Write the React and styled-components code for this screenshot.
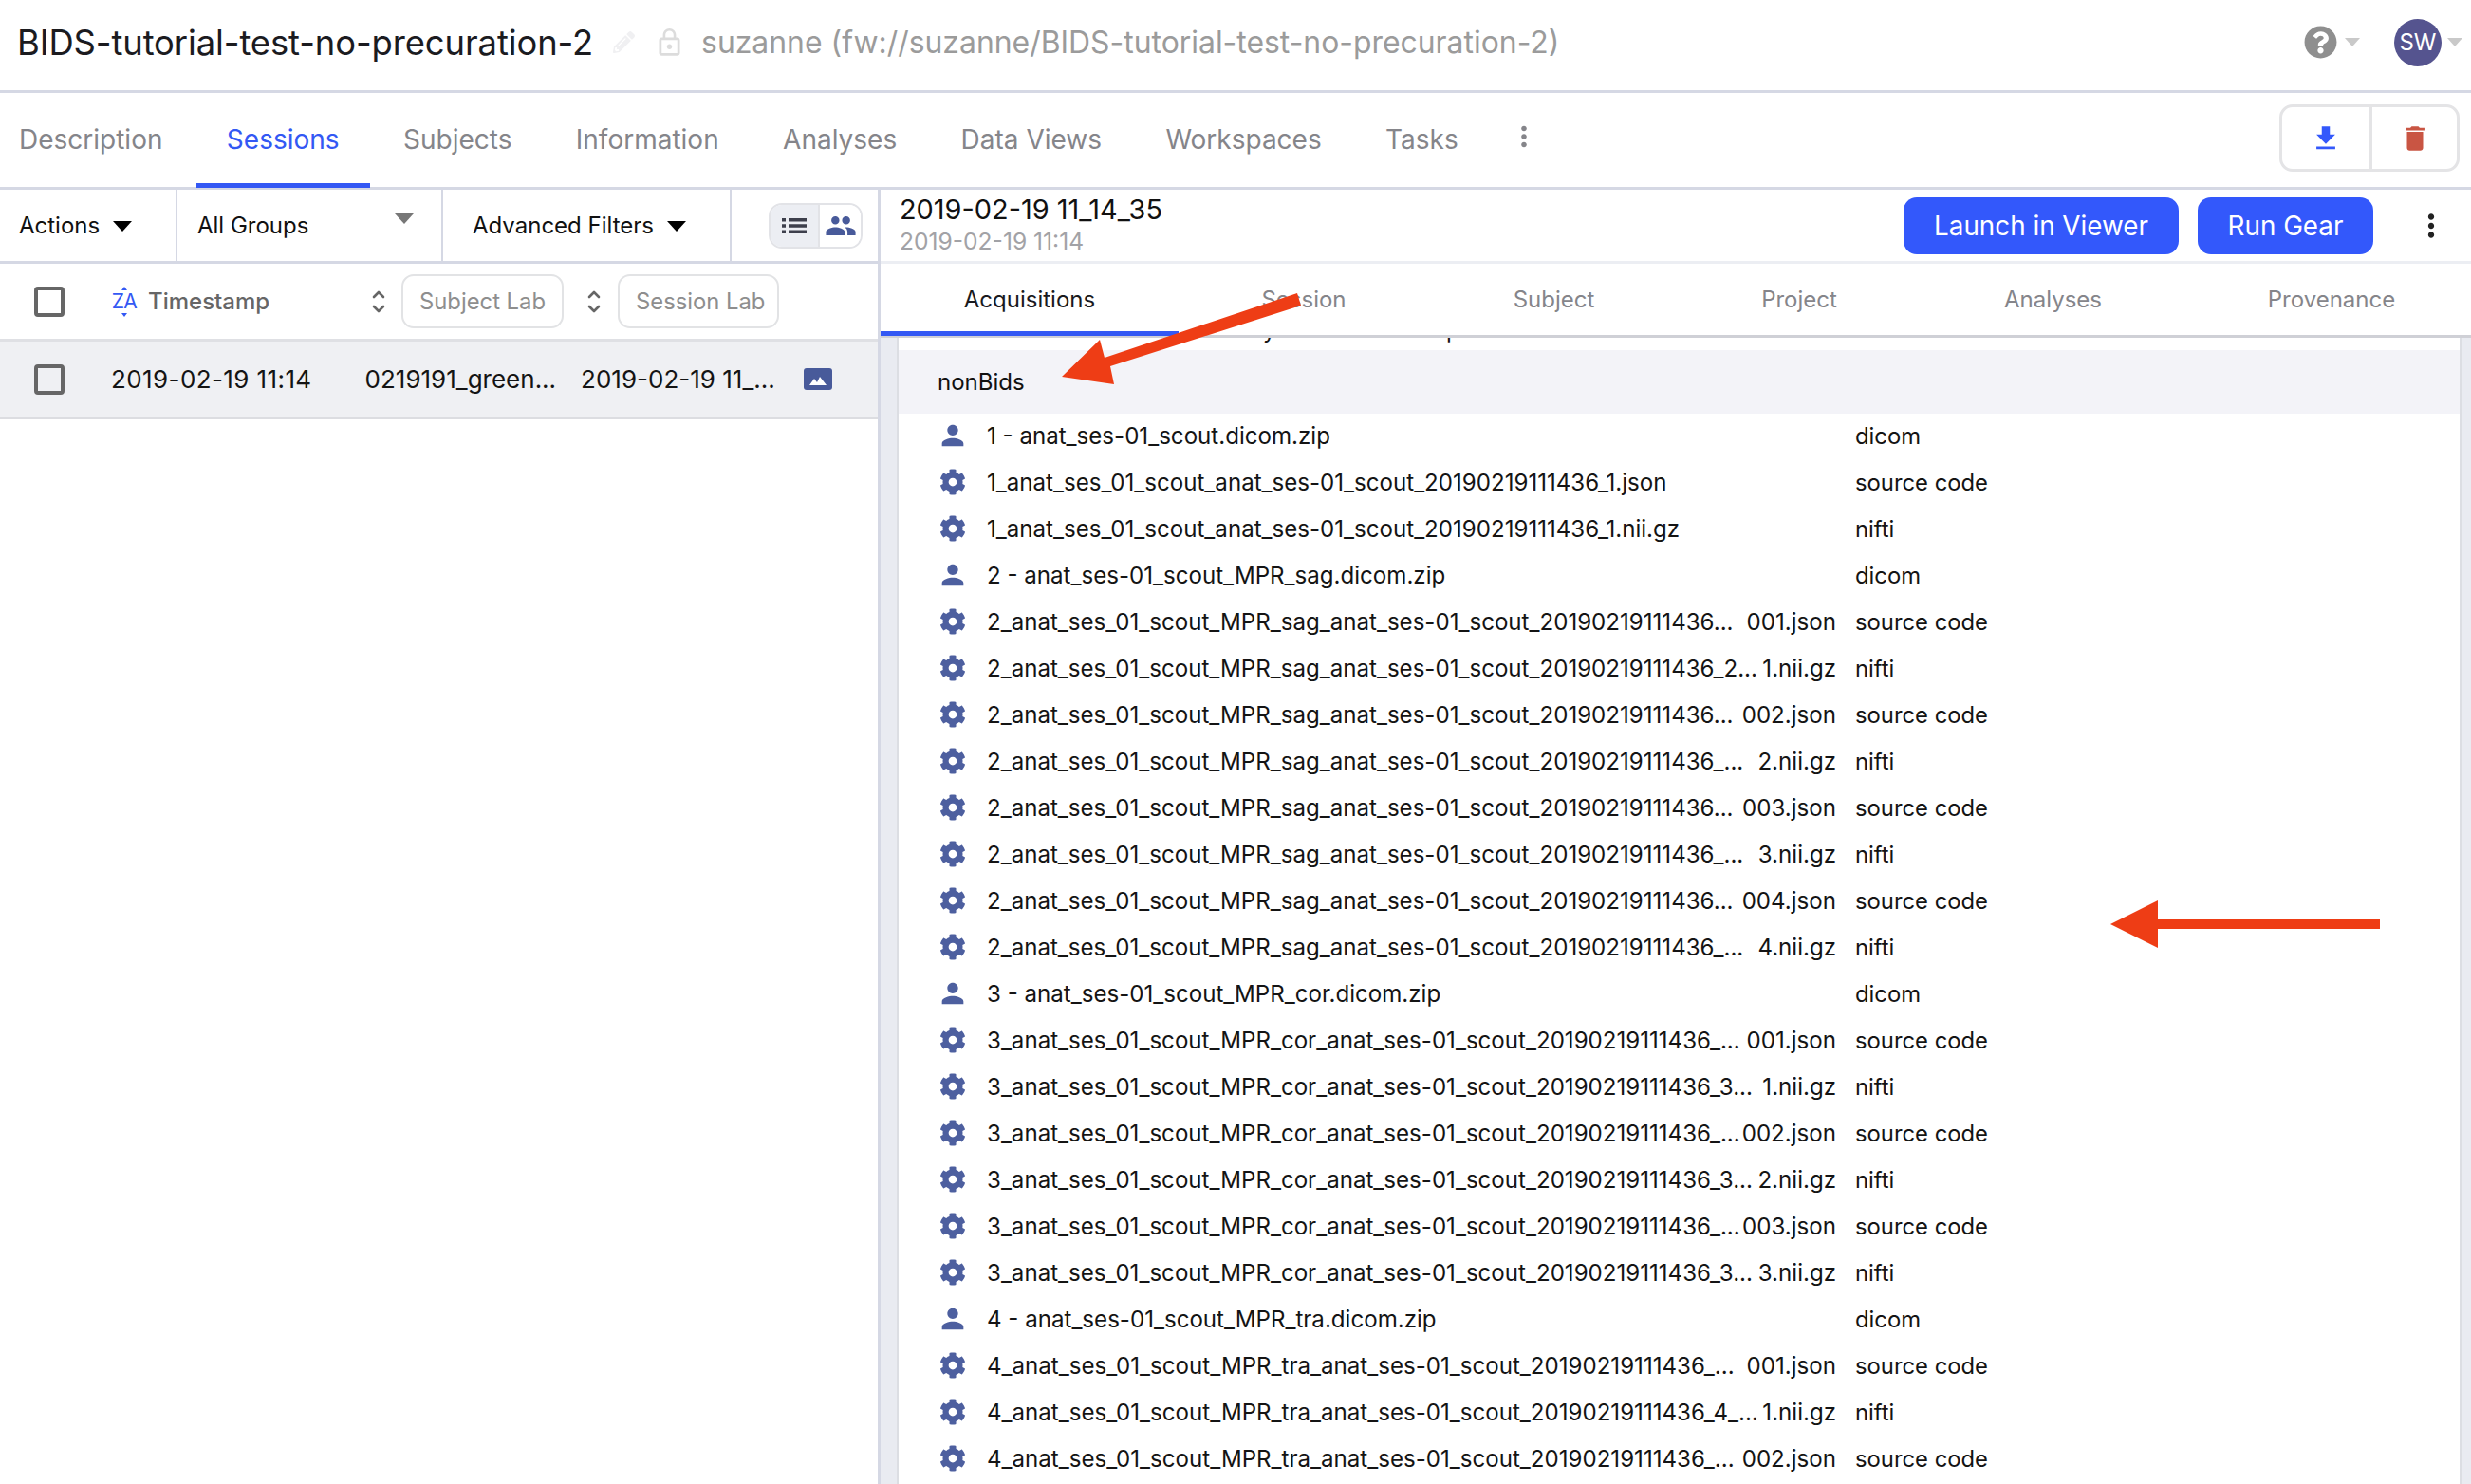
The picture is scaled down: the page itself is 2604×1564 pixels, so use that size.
import React from "react";
import styled, { createGlobalStyle } from "styled-components";
import { FaCog, FaQuestionCircle, FaPencilAlt } from "react-icons/fa";
import { MdPerson, MdPeople, MdFileDownload, MdDelete, MdMoreVert, MdLockOutline } from "react-icons/md";

const Global = createGlobalStyle`
  html, body { margin: 0; padding: 0; background: #fff; }
  body { font-family: Inter, "Liberation Sans", sans-serif; }
  * { box-sizing: border-box; }
`;

const Page = styled.div`
  position: relative; width: 2604px; height: 1564px; overflow: hidden; background: #fff; color: #111;
`;
const TopBar = styled.header`
  height: 98px; border-bottom: 3px solid #d5d8e4; display: flex; align-items: center; padding: 0 9px 6px 18px;
`;
const Title = styled.h1`
  margin: 0; font-size: 36.4px; font-weight: 400; color: #1b1b1f; white-space: nowrap; letter-spacing: -0.1px;
`;
const PencilMark = styled(FaPencilAlt)`
  margin-left: 21px; width: 23px; height: 23px; color: #f0f0f2;
`;
const LockMark = styled(MdLockOutline)`
  margin-left: 20px; width: 33px; height: 34px; color: #dcdcdc;
`;
const PathText = styled.span`
  margin-left: 17px; font-size: 31.9px; color: #9b9b9b; white-space: nowrap;
`;
const TopRight = styled.div`
  margin-left: auto; display: flex; align-items: center;
`;
const HelpMark = styled(FaQuestionCircle)`
  width: 35px; height: 35px; color: #8f8f8f;
`;
const SmallCaret = styled.span`
  width: 0; height: 0; margin-left: ${p => p.$gap}px; border-left: 8px solid transparent; border-right: 8px solid transparent; border-top: 9px solid #c9c9c9;
`;
const Avatar = styled.div`
  width: 50px; height: 50px; margin-left: 36px; border-radius: 50%; background: #55548f; color: #fff; font-size: 24px;
  display: flex; align-items: center; justify-content: center;
`;

const TabBar = styled.nav`
  height: 102px; border-bottom: 3px solid #d5d8e4; display: flex; align-items: stretch; padding-left: 7px; position: relative;
`;
const Tab = styled.div`
  display: flex; align-items: center; padding: 2px 32px 0; margin: 0 1.7px -1px; font-size: 28px; white-space: nowrap;
  color: ${p => (p.$active ? "#3358f4" : "#85858a")};
  border-bottom: 5px solid ${p => (p.$active ? "#3358f4" : "transparent")};
  &:first-child { padding-left: 13px; padding-right: 32px; margin-left: 0; }
`;
const TabDots = styled(MdMoreVert)`
  width: 34px; height: 38px; color: #85858a; align-self: center; margin: 0 0 8px 19px;
`;
const ActionGroup = styled.div`
  position: absolute; right: 12px; top: 12px; width: 190px; height: 71px; display: grid; grid-template-columns: 92px 1fr;
  border: 3px solid #e4e4e6; border-radius: 14px;
`;
const ActionCell = styled.div`
  display: flex; align-items: center; justify-content: center; color: ${p => p.$color};
  & + & { border-left: 3px solid #e4e4e6; }
  svg { width: 34px; height: 36px; }
`;

const Split = styled.main`
  display: grid; grid-template-columns: 928px 1fr; height: 1364px;
`;
const LeftPane = styled.section`
  border-right: 3px solid #d5d8e4; display: flex; flex-direction: column;
`;
const Toolbar = styled.div`
  height: 78px; border-bottom: 3px solid #d5d8e4; display: grid; grid-template-columns: 185px 280px 304px 1fr;
`;
const ToolCell = styled.div`
  display: flex; align-items: center; padding-left: ${p => p.$pad}px; position: relative; font-size: 24px; color: #111;
  & + & { border-left: 2px solid #d5d8e4; }
`;
const Caret = styled.span`
  width: 0; height: 0; border-left: 10px solid transparent; border-right: 10px solid transparent;
  border-top: 11px solid ${p => p.$gray ? "#777" : "#000"};
  margin-left: ${p => p.$gap}px;
  margin-top: ${p => p.$up ? -15 : 2}px;
`;
const Toggle = styled.div`
  margin-left: 39px; width: 99px; height: 48px; border: 2px solid #e2e3e7; border-radius: 14px; overflow: hidden;
  display: grid; grid-template-columns: 50px 1fr;
`;
const ToggleCell = styled.div`
  display: flex; align-items: center; justify-content: center; background: ${p => p.$on ? "#eceef3" : "#fff"}; color: ${p => p.$color};
  & + & { border-left: 2px solid #e2e3e7; }
  svg.people { width: 34px; height: 34px; }
`;
const ListGlyph = styled.svg`
  width: 26px; height: 16px;
`;
const HeadRow = styled.div`
  height: 82px; border-bottom: 3px solid #dfe0e4; display: flex; align-items: center; padding-left: 36px;
`;
const Check = styled.span`
  flex: none; width: 32px; height: 32px; border: 4px solid #666; border-radius: 4px; background: transparent;
`;
const ZA = styled.span`
  position: relative; flex: none; margin-left: 49px; width: 28px; color: #3358f4; font-size: 21px; line-height: 22px; letter-spacing: -0.5px; text-align: center;
  &::before, &::after {
    content: ""; position: absolute; left: 11px; width: 0; height: 0;
    border-left: 3px solid transparent; border-right: 3px solid transparent;
  }
  &::before { top: -5px; border-bottom: 4px solid #3358f4; }
  &::after { bottom: -5px; border-top: 4px solid #3358f4; }
`;
const Timestamp = styled.span`
  margin-left: 11px; width: 236px; font-size: 24px; font-weight: 500; color: #666;
`;
const SortIcon = styled.svg`
  flex: none; width: 14px; height: 26px; color: #666;
`;
const FilterInput = styled.div`
  flex: none; margin-left: ${p => p.$ml}px; width: ${p => p.$w}px; height: 57px; border: 2px solid #e2e3e5; border-radius: 13px; padding-left: 17px;
  display: flex; align-items: center; font-size: 23.8px; color: #8e8e8e; white-space: nowrap; overflow: hidden;
`;
const SortGap = styled.span`
  flex: none; width: 25px;
`;
const SessionRow = styled.div`
  height: 82px; background: #eff0f3; border-bottom: 3px solid #dcdde1; display: flex; align-items: center; padding-left: 36px; font-size: 26px; color: #141414; white-space: nowrap;
`;
const Cell = styled.span`
  margin-left: ${p => p.$ml}px; letter-spacing: ${p => p.$ls || 0}px;
`;
const ImageGlyph = styled.svg`
  flex: none; margin-left: 30px; width: 30px; height: 23px; color: #485a9a;
`;

const RightPane = styled.section`
  display: flex; flex-direction: column; min-width: 0;
`;
const DetailHead = styled.div`
  height: 78px; border-bottom: 3px solid #eceef3; display: flex; align-items: center; padding-left: 20px;
`;
const DetailTitles = styled.div`
  display: flex; flex-direction: column; flex: 1; padding-bottom: 4px;
`;
const DetailTitle = styled.div`
  font-size: 28.9px; color: #111; line-height: 36px;
`;
const DetailSub = styled.div`
  font-size: 24.6px; color: #a2a2a6; line-height: 30px;
`;
const Primary = styled.button`
  margin-left: ${p => p.$ml}px; width: ${p => p.$w}px; height: 60px; border: 0; border-radius: 14px; background: #3358fb; color: #fff; font: 400 27.8px Inter, sans-serif;
`;
const MoreBtn = styled(MdMoreVert)`
  margin-left: 42px; margin-right: 23px; width: 38px; height: 38px; color: #222;
`;
const SubTabs = styled.div`
  height: 78px; border-bottom: 3px solid #cfd0d6; display: grid; grid-template-columns: 314px 264px 263px 254px 281px 1fr;
`;
const SubTab = styled.div`
  display: flex; align-items: center; justify-content: center; font-size: 24px; padding-top: 4px;
  color: ${p => p.$active ? "#1a1a1e" : "#85858a"};
  border-bottom: 5px solid ${p => p.$active ? "#3358f4" : "transparent"};
  margin-bottom: -1px;
  &:last-child { padding-left: 6px; }
`;
const ListFrame = styled.div`
  flex: 1; min-height: 0; display: flex; background: #fff; overflow: hidden;
`;
const Rail = styled.div`
  flex: none; width: ${p => p.$w}px; background: #e9ebf1; border-${p => p.$side}: 2px solid #dcdee3;
`;
const ListBody = styled.div`
  flex: 1; min-width: 0; display: flex; flex-direction: column;
`;
const ClippedLine = styled.div`
  flex: none; height: 13px; overflow: hidden; position: relative; font-size: 24px; line-height: 10px; color: #141414;
`;
const ClippedGlyph = styled.span`
  position: absolute; top: -13px; left: ${p => p.$x}px;
`;
const GroupHead = styled.div`
  flex: none; height: 67px; background: #f3f3f8; display: flex; align-items: center; padding-left: 41px; font-size: 24px; color: #111;
`;
const FileRow = styled.div`
  flex: none; height: 49px; display: flex; align-items: center; padding: 0 0 3px 43px; font-size: 24.1px; color: #141414; white-space: nowrap;
`;
const FileIcon = styled.span`
  flex: none; width: 28px; height: 28px; display: inline-flex; align-items: center; justify-content: center; color: #4d5f9f;
  svg { width: ${p => p.$person ? 34 : 28}px; height: ${p => p.$person ? 34 : 28}px; flex: none; }
`;
const FileName = styled.span`
  margin-left: 22px; width: 895px; flex: none; display: flex; justify-content: space-between;
`;
const FileType = styled.span`
  margin-left: 20px; font-size: 23.8px;
`;
const Annotation = styled.svg`
  position: absolute; left: 0; top: 0; width: 2604px; height: 1564px; pointer-events: none;
`;

const sortIcon = (
  <SortIcon viewBox="0 0 14 26" fill="none" stroke="currentColor" strokeWidth="2.6" strokeLinecap="round" strokeLinejoin="round">
    <path d="M2 8l5-5 5 5M2 18l5 5 5-5" />
  </SortIcon>
);

const P = "_anat_ses_01_scout_MPR_";
const mid = "anat_ses-01_scout_20190219111436";
const files = [
  ["u", "1 - anat_ses-01_scout.dicom.zip", "", "dicom"],
  ["g", "1_anat_ses_01_scout_anat_ses-01_scout_20190219111436_1.json", "", "source code"],
  ["g", "1_anat_ses_01_scout_anat_ses-01_scout_20190219111436_1.nii.gz", "", "nifti"],
  ["u", "2 - anat_ses-01_scout_MPR_sag.dicom.zip", "", "dicom"],
  ["g", `2${P}sag_${mid}...`, "001.json", "source code"],
  ["g", `2${P}sag_${mid}_2...`, "1.nii.gz", "nifti"],
  ["g", `2${P}sag_${mid}...`, "002.json", "source code"],
  ["g", `2${P}sag_${mid}_...`, "2.nii.gz", "nifti"],
  ["g", `2${P}sag_${mid}...`, "003.json", "source code"],
  ["g", `2${P}sag_${mid}_...`, "3.nii.gz", "nifti"],
  ["g", `2${P}sag_${mid}...`, "004.json", "source code"],
  ["g", `2${P}sag_${mid}_...`, "4.nii.gz", "nifti"],
  ["u", "3 - anat_ses-01_scout_MPR_cor.dicom.zip", "", "dicom"],
  ["g", `3${P}cor_${mid}_...`, "001.json", "source code"],
  ["g", `3${P}cor_${mid}_3...`, "1.nii.gz", "nifti"],
  ["g", `3${P}cor_${mid}_...`, "002.json", "source code"],
  ["g", `3${P}cor_${mid}_3...`, "2.nii.gz", "nifti"],
  ["g", `3${P}cor_${mid}_...`, "003.json", "source code"],
  ["g", `3${P}cor_${mid}_3...`, "3.nii.gz", "nifti"],
  ["u", "4 - anat_ses-01_scout_MPR_tra.dicom.zip", "", "dicom"],
  ["g", `4${P}tra_${mid}_...`, "001.json", "source code"],
  ["g", `4${P}tra_${mid}_4_...`, "1.nii.gz", "nifti"],
  ["g", `4${P}tra_${mid}_...`, "002.json", "source code"],
];

const mainTabs = ["Description", "Sessions", "Subjects", "Information", "Analyses", "Data Views", "Workspaces", "Tasks"];
const subTabs = ["Acquisitions", "Session", "Subject", "Project", "Analyses", "Provenance"];

export default function App() {
  return (
    <Page>
      <Global />
      <TopBar>
        <Title>BIDS-tutorial-test-no-precuration-2</Title>
        <PencilMark />
        <LockMark />
        <PathText>suzanne (fw://suzanne/BIDS-tutorial-test-no-precuration-2)</PathText>
        <TopRight>
          <HelpMark />
          <SmallCaret $gap={8} />
          <Avatar>SW</Avatar>
          <SmallCaret $gap={6} />
        </TopRight>
      </TopBar>
      <TabBar>
        {mainTabs.map(t => <Tab key={t} $active={t === "Sessions"}>{t}</Tab>)}
        <TabDots />
        <ActionGroup>
          <ActionCell $color="#3358fb"><MdFileDownload /></ActionCell>
          <ActionCell $color="#c95543"><MdDelete /></ActionCell>
        </ActionGroup>
      </TabBar>
      <Split>
        <LeftPane>
          <Toolbar>
            <ToolCell $pad={20}>Actions<Caret $gap={14} /></ToolCell>
            <ToolCell $pad={21}>All Groups<Caret $gray $up $gap={91} /></ToolCell>
            <ToolCell $pad={31}>Advanced Filters<Caret $gap={14} /></ToolCell>
            <ToolCell $pad={0}>
              <Toggle>
                <ToggleCell $on $color="#3d3f4c">
                  <ListGlyph viewBox="0 0 26 16" fill="currentColor">
                    <path d="M0 0h4v3.4H0zM7 0h19v3.4H7zM0 6.3h4v3.4H0zM7 6.3h19v3.4H7zM0 12.6h4V16H0zM7 12.6h19V16H7z" />
                  </ListGlyph>
                </ToggleCell>
                <ToggleCell $color="#485a9a"><MdPeople className="people" /></ToggleCell>
              </Toggle>
            </ToolCell>
          </Toolbar>
          <HeadRow>
            <Check />
            <ZA>ZA</ZA>
            <Timestamp>Timestamp</Timestamp>
            {sortIcon}
            <FilterInput $ml={17} $w={171}>Subject Lab</FilterInput>
            <SortGap />
            {sortIcon}
            <FilterInput $ml={18} $w={170}>Session Lab</FilterInput>
          </HeadRow>
          <SessionRow>
            <Check />
            <Cell $ml={49} $ls={0.4}>2019-02-19 11:14</Cell>
            <Cell $ml={56}>0219191_green...</Cell>
            <Cell $ml={26}>2019-02-19 11_...</Cell>
            <ImageGlyph viewBox="0 0 30 23">
              <rect width="30" height="23" rx="3" fill="currentColor" />
              <path d="M6 18l5-7 3 4 3-6 7 9z" fill="#fff" />
            </ImageGlyph>
          </SessionRow>
        </LeftPane>
        <RightPane>
          <DetailHead>
            <DetailTitles>
              <DetailTitle>2019-02-19 11_14_35</DetailTitle>
              <DetailSub>2019-02-19 11:14</DetailSub>
            </DetailTitles>
            <Primary $ml={0} $w={290}>Launch in Viewer</Primary>
            <Primary $ml={20} $w={185}>Run Gear</Primary>
            <MoreBtn />
          </DetailHead>
          <SubTabs>
            {subTabs.map(t => <SubTab key={t} $active={t === "Acquisitions"}>{t}</SubTab>)}
          </SubTabs>
          <ListFrame>
            <Rail $w={19} $side="right" />
            <ListBody>
              <ClippedLine>
                <ClippedGlyph $x={384}>y</ClippedGlyph>
                <ClippedGlyph $x={577}>p</ClippedGlyph>
              </ClippedLine>
              <GroupHead>nonBids</GroupHead>
              {files.map(([kind, name, tail, type], i) => (
                <FileRow key={i}>
                  <FileIcon $person={kind === "u"}>{kind === "u" ? <MdPerson /> : <FaCog />}</FileIcon>
                  <FileName><span>{name}</span>{tail && <span>{tail}</span>}</FileName>
                  <FileType>{type}</FileType>
                </FileRow>
              ))}
            </ListBody>
            <Rail $w={12} $side="left" />
          </ListFrame>
        </RightPane>
      </Split>
      <Annotation viewBox="0 0 2604 1564">
        <polygon fill="#ee3d15" points="1367,309 1371,322 1170,386 1174,405 1119,397 1159,358 1164,377" />
        <polygon fill="#ee3d15" points="2224,974 2274,949 2274,969 2508,969 2508,979 2274,979 2274,999" />
      </Annotation>
    </Page>
  );
}
